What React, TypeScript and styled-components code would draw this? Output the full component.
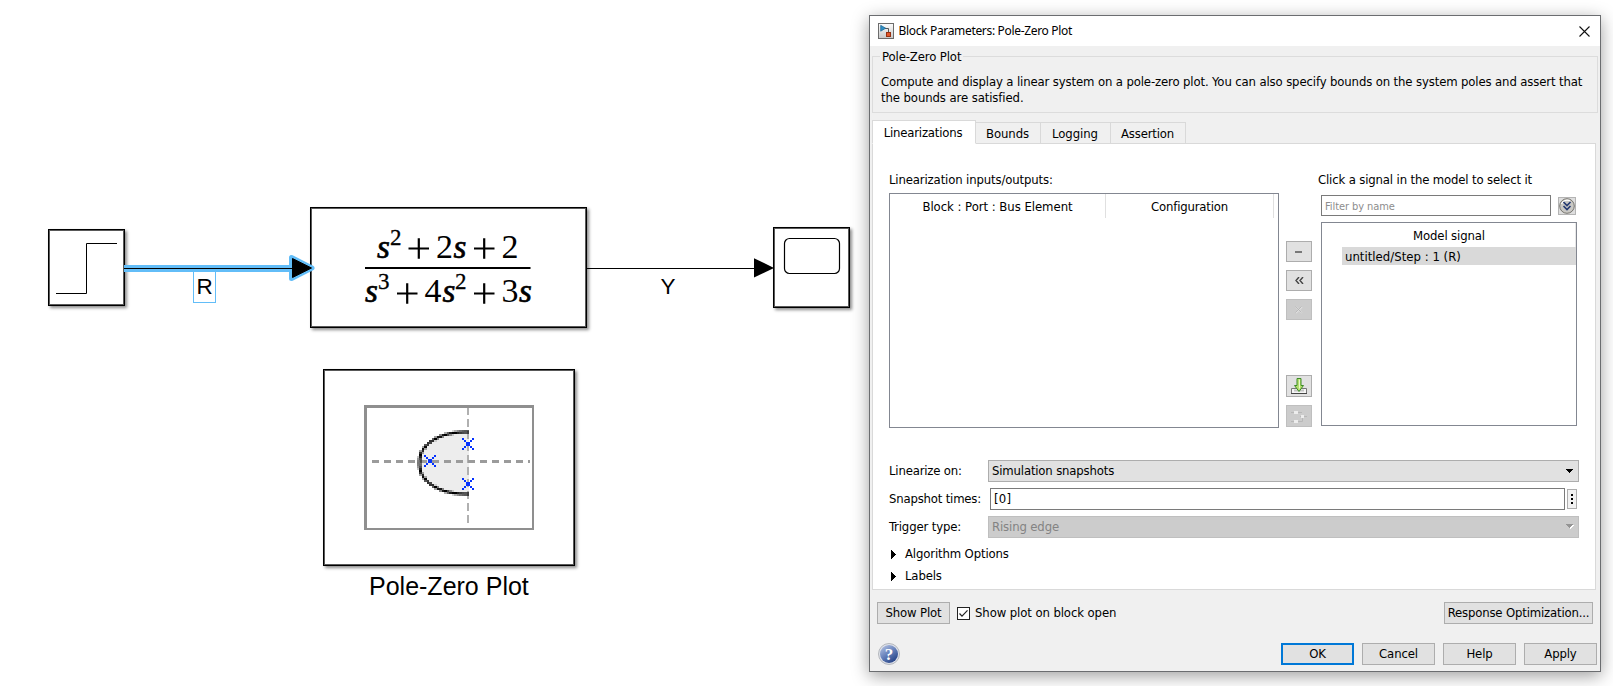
import React from "react";
import styled, { createGlobalStyle, css } from "styled-components";

const GlobalStyle = createGlobalStyle`
  *, *::before, *::after { box-sizing: border-box; }
  body {
    margin: 0;
    background: #fff;
    overflow: hidden;
  }
`;

const Desktop = styled.main`
  position: relative;
  width: 1613px;
  height: 686px;
  overflow: hidden;
  background: #fff;
  color: #000;
  font-family: "Liberation Sans", sans-serif;
`;

/* ---------- model canvas ---------- */

interface Box {
  $x: number;
  $y: number;
  $w: number;
  $h: number;
}

const Block = styled.div<Box>`
  position: absolute;
  left: ${(p) => p.$x}px;
  top: ${(p) => p.$y}px;
  width: ${(p) => p.$w}px;
  height: ${(p) => p.$h}px;
  background: #fff;
  border: 1px solid #000;
  outline: 0.8px solid rgba(0, 0, 0, 0.65);
  outline-offset: -2px;
  box-shadow: 2px 2px 3px rgba(0, 0, 0, 0.45);
`;

const Wire = styled.svg<Box>`
  position: absolute;
  left: ${(p) => p.$x}px;
  top: ${(p) => p.$y}px;
  width: ${(p) => p.$w}px;
  height: ${(p) => p.$h}px;
`;

const BlockArt = styled.svg`
  display: block;
  margin: -1px;
  overflow: visible;
`;

const CanvasLabel = styled.span<{ $x: number; $y: number; $size: number; $selected?: boolean }>`
  position: absolute;
  left: ${(p) => p.$x}px;
  top: ${(p) => p.$y}px;
  font-size: ${(p) => p.$size}px;
  line-height: 31px;
  white-space: nowrap;
  ${(p) =>
    p.$selected &&
    css`
      width: 23px;
      height: 33px;
      text-align: center;
      border: 1px solid #62bdf8;
    `}
`;

/* ---------- dialog ---------- */

const Dialog = styled.section`
  position: absolute;
  left: 869px;
  top: 15px;
  width: 732px;
  height: 657px;
  display: flex;
  flex-direction: column;
  background: #f0f0f0;
  border: 1px solid #6b6d70;
  box-shadow: 0 4px 16px rgba(0, 0, 0, 0.38);
  font-family: "DejaVu Sans Condensed", "DejaVu Sans", sans-serif;
  font-size: 13px;
  line-height: 16px;
`;

const Text = styled.span<{ $ls?: number }>`
  white-space: nowrap;
  letter-spacing: ${(p) => p.$ls ?? -0.14}px;
`;

const TitleBar = styled.header`
  display: flex;
  align-items: center;
  height: 30px;
  padding: 0 10px 0 8px;
  background: #fff;
`;

const Title = styled.h1`
  flex: 1;
  margin: 0 0 0 4.5px;
  font: 400 12px/16px "Noto Sans", sans-serif;
  letter-spacing: -0.33px;
`;

const Description = styled.fieldset`
  height: 66px;
  width: 726px;
  margin: 1px 0 0 2px;
  padding: 0 8px;
  border: 1px solid #dcdcdc;

  legend {
    height: 18px;
    padding: 0 2px;
    line-height: 20px;
    margin-left: -1px;
  }

  p {
    margin: 9px 0 0;
    white-space: nowrap;
  }
`;

const TabStrip = styled.nav`
  display: flex;
  align-items: flex-end;
  height: 24px;
  margin: 7px 0 -1px 2px;
  position: relative;
`;

const Tab = styled.button<{ $w: number; $active?: boolean }>`
  width: ${(p) => p.$w}px;
  height: 22px;
  padding: 1px 1px 0 0;
  border: 1px solid #d9d9d9;
  border-left-width: 0;
  background: #f0f0f0;
  font: inherit;
  color: #000;
  text-align: center;
  ${(p) =>
    p.$active &&
    css`
      height: 24px;
      border-left-width: 1px;
      border-bottom-color: #fff;
      background: #fff;
      padding: 1px 2px 0 0;
    `}
`;

const Panel = styled.div`
  width: 724px;
  height: 447px;
  margin-left: 2px;
  padding: 28px 0 0 16px;
  background: #fff;
  border: 1px solid #d9d9d9;
`;

const Columns = styled.div`
  display: flex;
  height: 264px;
`;

const SignalsColumn = styled.div`
  display: flex;
  flex-direction: column;
  width: 390px;
`;

const Table = styled.div`
  display: flex;
  height: 235px;
  margin-top: 5px;
  border: 1px solid #838791;
`;

const HeaderCell = styled.div<{ $w: number }>`
  width: ${(p) => p.$w}px;
  height: 24px;
  padding-top: 5px;
  text-align: center;
  border-right: 1px solid #e0e0e0;
`;

const ToolColumn = styled.div`
  display: flex;
  flex-direction: column;
  width: 26px;
  margin: 69px 9px 0 7px;
  gap: 8px;
`;

const ToolButton = styled.button<{ $tall?: boolean; $off?: boolean; $gap?: number }>`
  display: flex;
  align-items: center;
  justify-content: center;
  width: 26px;
  height: ${(p) => (p.$tall ? 22 : 21)}px;
  flex: none;
  margin-top: ${(p) => p.$gap ?? 0}px;
  padding: 0;
  background: ${(p) => (p.$off ? "#cccccc" : "#e1e1e1")};
  border: 1px solid ${(p) => (p.$off ? "#bfbfbf" : "#adadad")};
`;

const PickColumn = styled.div`
  display: flex;
  flex-direction: column;
  width: 258px;
`;

const PickCaption = styled.div`
  margin-left: -3px;
`;

const FilterRow = styled.div`
  display: flex;
  align-items: center;
  justify-content: space-between;
  width: 255px;
  margin: 7px 0 0;
`;

const FilterBox = styled.div`
  width: 230px;
  height: 21px;
  padding: 1px 3px;
  border: 1px solid #7a7a7a;
  color: #8d8d8d;
  font-size: 11px;
  line-height: 20px;
`;

const RoundButton = styled.button`
  width: 18px;
  height: 18px;
  padding: 0;
  border: 1px solid #b4b4b4;
  background: #dedede;

  svg {
    display: block;
  }
`;

const ModelList = styled.div`
  width: 256px;
  height: 204px;
  margin-top: 6px;
  border: 1px solid #838791;
`;

const ListHeader = styled.div`
  width: 254px;
  height: 24px;
  padding: 5px 0 0 1px;
  text-align: center;
  border-right: 1px solid #e8e8e8;
`;

const ListRow = styled.div`
  height: 18px;
  margin-left: 20px;
  padding: 2px 3px 0;
  background: #d9d9d9;
`;

const Form = styled.div`
  display: flex;
  flex-direction: column;
  gap: 6px;
  margin-top: 24px;
`;

const FormRow = styled.div`
  display: flex;
  align-items: center;
  width: 690px;
  height: 22px;

  > :first-child {
    width: 99px;
  }
`;

const Combo = styled.div<{ $off?: boolean }>`
  display: flex;
  align-items: center;
  justify-content: space-between;
  flex: 1;
  height: 22px;
  padding: 0 4px 0 3px;
  background: ${(p) => (p.$off ? "#cccccc" : "#e1e1e1")};
  border: 1px solid ${(p) => (p.$off ? "#bfbfbf" : "#adadad")};
  color: ${(p) => (p.$off ? "#838383" : "#000")};
`;

const Edit = styled.div`
  width: 575px;
  height: 22px;
  margin-left: 2px;
  padding: 2px 3px;
  border: 1px solid #7a7a7a;
`;

const MoreButton = styled.button`
  width: 10px;
  height: 20px;
  margin-left: 2px;
  padding: 0;
  border: 1px solid #adadad;
  background: #f2f2f2;

  svg {
    display: block;
  }
`;

const Expander = styled.div`
  display: flex;
  align-items: center;
  gap: 9px;
  height: 22px;
  padding-left: 2px;
`;

const Expanders = styled.div`
  margin-top: 5px;
`;

const Button = styled.button<{ $w: number; $primary?: boolean }>`
  width: ${(p) => p.$w}px;
  height: 22px;
  padding: 0;
  font: inherit;
  color: #000;
  white-space: nowrap;
  background: #e1e1e1;
  border: ${(p) => (p.$primary ? "2px solid #0078d7" : "1px solid #adadad")};
`;

const PlotBar = styled.div`
  display: flex;
  align-items: center;
  margin: 12px 7px 0;
`;

const CheckLabel = styled.label`
  display: flex;
  align-items: center;
  flex: 1;
  gap: 5px;
  margin-left: 7px;
`;

const CheckBox = styled.span`
  width: 13px;
  height: 13px;
  border: 1px solid #222;
  background: #fff;

  svg {
    display: block;
  }
`;

const Footer = styled.footer`
  display: flex;
  align-items: center;
  gap: 8px;
  margin: 18px 3px 0 8px;
  height: 24px;
`;

const Spacer = styled.span`
  flex: 1;
`;

/* ---------- drawings ---------- */

const Cross = ({ x, y }: { x: number; y: number }) => (
  <g fill="#0432ff" shapeRendering="crispEdges">
    {[-6, -4, -2, 0, 2, 4].map((i) => (
      <React.Fragment key={i}>
        <rect x={x + i} y={y + i} width="2" height="2" />
        <rect x={x + i} y={y - i - 2} width="2" height="2" />
      </React.Fragment>
    ))}
  </g>
);

/* The half-plane boundary is a coarse bitmap: each cell's darkness follows its distance to the curve. */
const CELL_W = 2.5;
const CELL_H = 2;
const curveCells = (() => {
  const cells: { x: number; y: number; a: number }[] = [];
  const cx = 144;
  const cy = 93.5;
  const rx = 48;
  const ry = 31;
  const n = 2.15;
  for (let x = 93.5; x < 145; x += CELL_W) {
    for (let y = 60.5; y < 127; y += CELL_H) {
      const dx = Math.abs(x + CELL_W / 2 - cx) / rx;
      const dy = Math.abs(y + CELL_H / 2 - cy) / ry;
      const f = dx ** n + dy ** n - 1;
      const grad = Math.hypot((n * dx ** (n - 1)) / rx, (n * dy ** (n - 1)) / ry);
      const a = Math.min(1, 1.15 - Math.abs(f) / grad / 2);
      if (a > 0.08) cells.push({ x, y, a });
    }
  }
  return cells;
})();

const TransferFunction = () => (
  <BlockArt width="277" height="121" fontFamily="Liberation Serif, serif" fontSize="34">
    <g fontStyle="italic" fontSize="33" stroke="#000" strokeWidth=".7">
      <text x="67" y="50.500">s</text>
      <text x="143.500" y="50.500">s</text>
      <text x="55" y="95">s</text>
      <text x="132.500" y="95">s</text>
      <text x="209" y="95">s</text>
    </g>
    <g fontSize="23" stroke="#000" strokeWidth=".3">
      <text x="80" y="37.500">2</text>
      <text x="68" y="81.500">3</text>
      <text x="145" y="81.500">2</text>
    </g>
    <text x="126" y="50.500">2</text>
    <text x="191.500" y="50.500">2</text>
    <text x="114.500" y="95">4</text>
    <text x="191.500" y="95">3</text>
    <g stroke="#000" strokeWidth="2.2">
      <path d="M98.500 41.500h20.500M108.800 31.300v20.400M164 41.500h20.500M174.200 31.300v20.400" />
      <path d="M87 86.500h20.500M97.200 76.300v20.400M164 86.500h20.500M174.200 76.300v20.400" />
    </g>
    <path d="M55 61H220.500" stroke="#000" strokeWidth="2" />
  </BlockArt>
);

const PoleZeroArt = () => (
  <BlockArt width="252" height="197">
    <path d="M41 36H211V161H41ZM44 39V159H209V39Z" fill="#8f8f8f" fillRule="evenodd" />
    <path d="M146 62.500H141C116 62.500 96 74 96 94C96 113 116 124.500 141 124.500H146Z" fill="#ededed" />
    <path d="M145 39V156" stroke="#b0b0b0" strokeWidth="2" strokeDasharray="8 4" strokeDashoffset="1" />
    <path d="M49 92.500H207" stroke="#9b9b9b" strokeWidth="3" strokeDasharray="7 5" />
    <g shapeRendering="crispEdges">
      {curveCells.map((c) => (
        <rect key={`${c.x}-${c.y}`} x={c.x} y={c.y} width={CELL_W} height={CELL_H} fillOpacity={c.a} />
      ))}
    </g>
    <Cross x={145} y={75} />
    <Cross x={145} y={115} />
    <Cross x={107} y={92} />
  </BlockArt>
);

const AppIcon = () => (
  <svg width="16" height="16">
    <defs>
      <linearGradient id="app-bg" x1="0" y1="0" x2="0" y2="1">
        <stop offset="0" stopColor="#fdfdfd" />
        <stop offset="1" stopColor="#c8c8c8" />
      </linearGradient>
    </defs>
    <rect x=".5" y=".5" width="15" height="15" fill="url(#app-bg)" stroke="#6c6c6c" />
    <path d="M7 5.500H10.500V9" fill="none" stroke="#555" />
    <path d="M2.700 2.300L7.700 5.200L2.700 8.200Z" fill="#2f8fc6" stroke="#1b618e" strokeWidth=".7" />
    <rect x="8.500" y="9.500" width="4" height="4" fill="#e2572b" stroke="#97300f" />
  </svg>
);

const HelpIcon = () => (
  <svg width="22" height="22" viewBox="0 0 22 22">
    <defs>
      <linearGradient id="help-bg" x1="0.100" y1="0" x2="0.800" y2="1">
        <stop offset="0" stopColor="#b5c3e3" />
        <stop offset=".5" stopColor="#6580ba" />
        <stop offset="1" stopColor="#1f3c80" />
      </linearGradient>
    </defs>
    <circle cx="11" cy="11" r="10.500" fill="#dfe2ea" stroke="#a6a9b0" strokeWidth=".8" />
    <circle cx="11" cy="11" r="9" fill="url(#help-bg)" />
    <text x="11" y="16.500" textAnchor="middle" fontFamily="Liberation Serif, serif" fontWeight="bold" fontSize="17" fill="#fff">
      ?
    </text>
  </svg>
);

const ImportIcon = () => (
  <svg width="16" height="17">
    <path d="M.5 10.500H15.500V15.500H.5Z" fill="#f5f5f5" stroke="#777" />
    <path d="M3 12.500H13" stroke="#c4c4c4" strokeWidth="2" />
    <path d="M0 15.500H16" stroke="#444" />
    <path d="M6 .5H10V7.500H12.500L8 13.500L3.500 7.500H6Z" fill="#b5e06f" stroke="#3d8b27" />
    <path d="M8.500 1.500V10.500" stroke="#e9f9c9" />
  </svg>
);

const BlocksIcon = () => (
  <svg width="16" height="15" fill="#ededed">
    <path d="M0 3.500H11M9 7.500H16M0 12.500H11.500V8" fill="none" stroke="#b8b8b8" />
    <rect x="3" y="2" width="4" height="3" />
    <rect x="10" y="6" width="3" height="3" />
    <rect x="3" y="11" width="4" height="3" />
  </svg>
);

const App = () => (
  <>
    <GlobalStyle />
    <Desktop>
      <Block $x={48} $y={229} $w={77} $h={77}>
        <BlockArt width="77" height="77">
          <path d="M8 64.500H38.500V14.500H69" fill="none" stroke="#000" />
        </BlockArt>
      </Block>

      <Block $x={310} $y={207} $w={277} $h={121}>
        <TransferFunction />
      </Block>

      <Wire $x={124} $y={252} $w={194} $h={32}>
        <path d="M0 16.500H166" stroke="#62bdf8" strokeWidth="7" />
        <path d="M167.500 5.500V26.500L188 16Z" fill="#000" stroke="#62bdf8" strokeWidth="5" strokeLinejoin="round" />
        <path d="M0 16.500H170M168.500 6.500V25.500L187.500 16Z" fill="#000" stroke="#000" strokeWidth="1" />
      </Wire>
      <CanvasLabel $x={193} $y={270} $size={22.5} $selected>
        R
      </CanvasLabel>

      <Wire $x={587} $y={252} $w={187} $h={32}>
        <path d="M0 16.500H168" stroke="#000" />
        <path d="M167 6.200V25.500L187 16Z" />
      </Wire>
      <CanvasLabel $x={660.5} $y={271} $size={22.5}>
        Y
      </CanvasLabel>

      <Block $x={773} $y={227} $w={77} $h={81}>
        <BlockArt width="77" height="81">
          <rect x="11.500" y="11.500" width="55" height="35" rx="5" fill="none" stroke="#000" strokeWidth="1.200" />
        </BlockArt>
      </Block>

      <Block $x={323} $y={369} $w={252} $h={197}>
        <PoleZeroArt />
      </Block>
      <CanvasLabel $x={369} $y={571} $size={25}>
        Pole-Zero Plot
      </CanvasLabel>

      <Dialog>
        <TitleBar>
          <AppIcon />
          <Title>Block Parameters: Pole-Zero Plot</Title>
          <svg width="11" height="11">
            <path d="M.5 .5L10.500 10.500M10.500 .5L.5 10.500" stroke="#111" strokeWidth="1.100" />
          </svg>
        </TitleBar>

        <Description>
          <legend>
            <Text $ls={-0.12}>Pole-Zero Plot</Text>
          </legend>
          <p>
            <Text $ls={-0.133}>
              Compute and display a linear system on a pole-zero plot. You can also specify bounds on the system poles
              and assert that
            </Text>
            <br />
            <Text $ls={-0.1}>the bounds are satisfied.</Text>
          </p>
        </Description>

        <TabStrip>
          <Tab $w={104} $active>
            <Text $ls={-0.2}>Linearizations</Text>
          </Tab>
          <Tab $w={65}>
            <Text $ls={-0.1}>Bounds</Text>
          </Tab>
          <Tab $w={70}>
            <Text $ls={-0.05}>Logging</Text>
          </Tab>
          <Tab $w={75}>
            <Text $ls={-0.18}>Assertion</Text>
          </Tab>
        </TabStrip>

        <Panel>
          <Columns>
            <SignalsColumn>
              <Text>Linearization inputs/outputs:</Text>
              <Table>
                <HeaderCell $w={216}>
                  <Text $ls={-0.04}>Block : Port : Bus Element</Text>
                </HeaderCell>
                <HeaderCell $w={168}>
                  <Text $ls={-0.18}>Configuration</Text>
                </HeaderCell>
              </Table>
            </SignalsColumn>

            <ToolColumn>
              <ToolButton>
                <svg width="8" height="2">
                  <path d="M0 1H7" stroke="#333" strokeWidth="1.200" />
                </svg>
              </ToolButton>
              <ToolButton>
                <svg width="9" height="7">
                  <path d="M4 0L1 3.500L4 7M8 0L5 3.500L8 7" fill="none" stroke="#444" strokeWidth="1.400" />
                </svg>
              </ToolButton>
              <ToolButton $off>
                <svg width="8" height="8">
                  <path d="M1 1L7 7M7 1L1 7" stroke="#dedede" strokeWidth="1.500" />
                  <path d="M.5 .5L6.500 6.500M6.500 .5L.5 6.500" stroke="#b2b2b2" strokeWidth=".8" />
                </svg>
              </ToolButton>
              <ToolButton $tall $gap={47}>
                <ImportIcon />
              </ToolButton>
              <ToolButton $tall $off>
                <BlocksIcon />
              </ToolButton>
            </ToolColumn>

            <PickColumn>
              <PickCaption>
                <Text $ls={-0.15}>Click a signal in the model to select it</Text>
              </PickCaption>
              <FilterRow>
                <FilterBox>
                  <Text $ls={-0.08}>Filter by name</Text>
                </FilterBox>
                <RoundButton>
                  <svg width="16" height="16">
                    <circle cx="8" cy="8" r="7.300" fill="#c9c8c4" stroke="#77756f" />
                    <path d="M2.500 6A6 6 0 0 1 11 2.800" fill="none" stroke="#fff" strokeWidth="1.200" />
                    <path d="M4.500 4L8 7.500L11.500 4M4.500 8L8 11.500L11.500 8" fill="none" stroke="#263a73" strokeWidth="1.700" />
                  </svg>
                </RoundButton>
              </FilterRow>
              <ModelList>
                <ListHeader>
                  <Text>Model signal</Text>
                </ListHeader>
                <ListRow>
                  <Text $ls={0.02}>untitled/Step : 1 (R)</Text>
                </ListRow>
              </ModelList>
            </PickColumn>
          </Columns>

          <Form>
            <FormRow>
              <Text $ls={-0.18}>Linearize on:</Text>
              <Combo>
                <Text $ls={-0.17}>Simulation snapshots</Text>
                <svg width="9" height="5" shapeRendering="crispEdges">
                  <path d="M1 0H8V1H7V2H6V3H5V4H4V3H3V2H2V1H1Z" />
                </svg>
              </Combo>
            </FormRow>
            <FormRow>
              <Text $ls={-0.19}>Snapshot times:</Text>
              <Edit>
                <Text $ls={0.2}>[0]</Text>
              </Edit>
              <MoreButton>
                <svg width="8" height="18" shapeRendering="crispEdges">
                  <path d="M3 4h2v2h-2zM3 8h2v2h-2zM3 12h2v2h-2z" />
                </svg>
              </MoreButton>
            </FormRow>
            <FormRow>
              <Text>Trigger type:</Text>
              <Combo $off>
                <Text>Rising edge</Text>
                <svg width="9" height="6" shapeRendering="crispEdges">
                  <path d="M2 1H9V2H8V3H7V4H6V5H5V4H4V3H3Z" fill="#fff" />
                  <path d="M1 0H8V1H7V2H6V3H5V4H4V3H3V2H2V1H1Z" fill="#949494" />
                </svg>
              </Combo>
            </FormRow>
          </Form>

          <Expanders>
            {["Algorithm Options", "Labels"].map((name) => (
              <Expander key={name}>
                <svg width="5" height="9" shapeRendering="crispEdges">
                  <path d="M0 0L5 4.500L0 9Z" />
                </svg>
                <Text>{name}</Text>
              </Expander>
            ))}
          </Expanders>
        </Panel>

        <PlotBar>
          <Button $w={73}>
            <Text>Show Plot</Text>
          </Button>
          <CheckLabel>
            <CheckBox>
              <svg width="11" height="11">
                <path d="M1.500 5.500L4 8.200L9.500 2.300" fill="none" stroke="#222" strokeWidth="1.200" />
              </svg>
            </CheckBox>
            <Text $ls={-0.1}>Show plot on block open</Text>
          </CheckLabel>
          <Button $w={149}>
            <Text $ls={-0.17}>Response Optimization...</Text>
          </Button>
        </PlotBar>

        <Footer>
          <HelpIcon />
          <Spacer />
          <Button $w={73} $primary>
            <Text>OK</Text>
          </Button>
          <Button $w={73}>
            <Text>Cancel</Text>
          </Button>
          <Button $w={73}>
            <Text>Help</Text>
          </Button>
          <Button $w={73}>
            <Text>Apply</Text>
          </Button>
        </Footer>
      </Dialog>
    </Desktop>
  </>
);

export default App;
